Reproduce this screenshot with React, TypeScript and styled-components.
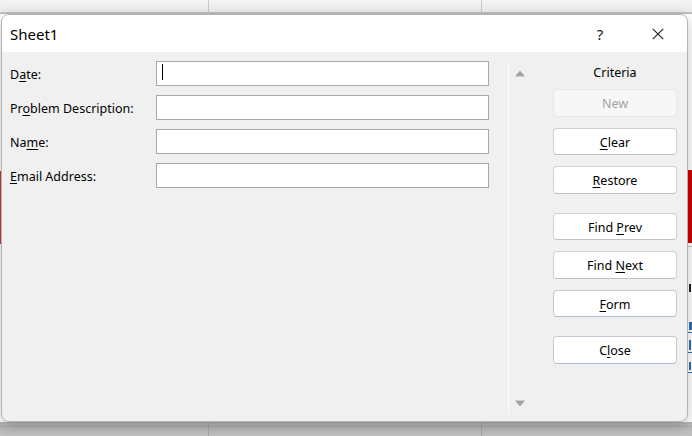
import React from "react";
import styled, { createGlobalStyle } from "styled-components";

const GlobalStyle = createGlobalStyle`
  html, body {
    margin: 0;
    padding: 0;
    background: #ececec;
  }
  * {
    box-sizing: border-box;
  }
`;

const uiFont = `"Noto Sans", "Open Sans", "Liberation Sans", sans-serif`;

// the worksheet visible behind the dialog
const Sheet = styled.div`
  position: relative;
  width: 692px;
  height: 436px;
  overflow: hidden;
  display: flex;
  flex-direction: column;
  font-family: ${uiFont};
`;

const HeaderBand = styled.div`
  height: 14px;
  background:
    linear-gradient(#c8c8c8, #c8c8c8) 208px 0 / 1px 100% no-repeat,
    linear-gradient(#c8c8c8, #c8c8c8) 481px 0 / 1px 100% no-repeat,
    linear-gradient(#c4c4c4, #c4c4c4) 0 12px / 100% 1px no-repeat,
    linear-gradient(#b8b8b8, #b8b8b8) 0 13px / 100% 1px no-repeat,
    linear-gradient(#f4f4f4, #e9e9e9);
`;

const GridBand = styled.div`
  flex: 1;
  background:
    linear-gradient(#d20000, #d20000) 688px 156px / 4px 73px no-repeat,
    linear-gradient(#c8383e, #c8383e) 0 157px / 1px 73px no-repeat,
    linear-gradient(#c6c6c6, #c6c6c6) 688px 232px / 4px 1px no-repeat,
    linear-gradient(#222, #222) 689px 270px / 2px 8px no-repeat,
    linear-gradient(#2f6fb8, #2f6fb8) 689px 308px / 3px 8px no-repeat,
    linear-gradient(#2f6fb8, #2f6fb8) 688px 318px / 4px 1px no-repeat,
    linear-gradient(#2f6fb8, #2f6fb8) 689px 326px / 2px 10px no-repeat,
    linear-gradient(#2f6fb8, #2f6fb8) 688px 338px / 4px 1px no-repeat,
    linear-gradient(#2f6fb8, #2f6fb8) 689px 348px / 2px 8px no-repeat,
    linear-gradient(#2f6fb8, #2f6fb8) 688px 358px / 4px 1px no-repeat,
    #ffffff;
`;

const FooterBand = styled.div`
  height: 14px;
  background:
    linear-gradient(#a6a6a6, #a6a6a6) 208px 0 / 1px 100% no-repeat,
    linear-gradient(#a6a6a6, #a6a6a6) 481px 0 / 1px 100% no-repeat,
    linear-gradient(#a9a9a9, #a9a9a9) 0 4px / 100% 1px no-repeat,
    linear-gradient(#b4b4b4, #c2c2c2);
`;

const Dialog = styled.div`
  position: absolute;
  left: 1px;
  top: 14px;
  width: 687px;
  height: 408px;
  display: flex;
  flex-direction: column;
  background: #f0f0f0;
  border: 1px solid #b4b4b4;
  border-radius: 8px;
  overflow: hidden;
  box-shadow: 0 4px 14px rgba(0, 0, 0, 0.22);
`;

const TitleBar = styled.div`
  height: 37px;
  flex: none;
  display: flex;
  align-items: center;
  background: #ffffff;
  padding-left: 8px;
`;

const Title = styled.div`
  flex: 1;
  font-size: 15px;
  color: #000;
  line-height: 20px;
`;

const TitleButton = styled.div`
  width: 58px;
  height: 37px;
  display: flex;
  align-items: center;
  justify-content: center;
  font-size: 15px;
  color: #111;
`;

const Body = styled.div`
  flex: 1;
  display: flex;
`;

const Fields = styled.div`
  width: 506px;
  padding: 9px 0 0 8px;
  display: flex;
  flex-direction: column;
  gap: 9px;
`;

const FieldRow = styled.div`
  display: grid;
  grid-template-columns: 146px 333px;
  align-items: center;
  height: 25px;
`;

const Label = styled.label`
  font-size: 12.5px;
  color: #000;
  padding-top: 2px;
  u {
    text-decoration: underline;
    text-underline-offset: 2px;
  }
`;

const FieldBox = styled.div<{ $focused?: boolean }>`
  position: relative;
  height: 25px;
  background: #ffffff;
  border: 1px solid #a8a8a8;
  &::after {
    content: "";
    display: ${(p) => (p.$focused ? "block" : "none")};
    position: absolute;
    left: 5px;
    top: 2px;
    width: 1px;
    height: 16px;
    background: #000;
  }
`;

const FieldInput = styled.input`
  width: 100%;
  height: 100%;
  border: none;
  outline: none;
  background: transparent;
  padding: 0 5px;
  font-family: ${uiFont};
  font-size: 12px;
  caret-color: transparent;
`;

const ScrollTrack = styled.div`
  width: 24px;
  margin: 11px 0 7px;
  border-left: 1px solid #ffffff;
  display: flex;
  flex-direction: column;
  justify-content: space-between;
  padding: 7px 0 7px 6px;
`;

const Actions = styled.div`
  width: 124px;
  margin-left: 21px;
  padding-top: 12px;
  display: flex;
  flex-direction: column;
`;

const Criteria = styled.div`
  height: 16px;
  line-height: 18px;
  text-align: center;
  font-size: 12.5px;
  color: #000;
  margin-bottom: 9px;
`;

const ButtonGroup = styled.div`
  display: flex;
  flex-direction: column;
  gap: 11px;
  & + & {
    margin-top: 19px;
  }
`;

const ActionButton = styled.button<{ $accent?: boolean }>`
  height: 27.5px;
  width: 124px;
  padding: 2px 0 0;
  font-family: ${uiFont};
  font-size: 12.5px;
  color: #000;
  background: #ffffff;
  border: 1px solid ${(p) => (p.$accent ? "#c2ccd6" : "#d0d0d0")};
  border-bottom-color: ${(p) => (p.$accent ? "#aebccb" : "#c0c0c0")};
  border-radius: 4px;
  u {
    text-decoration: underline;
    text-underline-offset: 2px;
  }
  &:disabled {
    background: #f7f7f7;
    color: #a3a3a3;
    border-color: #e6e6e6;
  }
`;

const Arrow = ({ down }: { down?: boolean }) => (
  <svg width="10" height="7" viewBox="0 0 10 7">
    <polygon
      points={down ? "0,0.5 10,0.5 5,6.5" : "5,0.5 10,6.5 0,6.5"}
      fill="#a3a3a3"
    />
  </svg>
);

const CloseIcon = () => (
  <svg width="12" height="12" viewBox="0 0 12 12">
    <path d="M0.8 0.8 L11.2 11.2 M11.2 0.8 L0.8 11.2" stroke="#1a1a1a" strokeWidth="1.1" />
  </svg>
);

const fields = [
  { pre: "D", key: "a", post: "te:" },
  { pre: "Pr", key: "o", post: "blem Description:" },
  { pre: "Na", key: "m", post: "e:" },
  { pre: "", key: "E", post: "mail Address:" },
];

interface IAction {
  pre: string;
  key: string;
  post: string;
  disabled?: boolean;
  accent?: boolean;
}

const groups: IAction[][] = [
  [
    { pre: "", key: "", post: "New", disabled: true },
    { pre: "", key: "C", post: "lear" },
    { pre: "", key: "R", post: "estore" },
  ],
  [
    { pre: "Find ", key: "P", post: "rev" },
    { pre: "Find ", key: "N", post: "ext" },
    { pre: "", key: "F", post: "orm", accent: true },
  ],
  [{ pre: "C", key: "l", post: "ose", accent: true }],
];

export default function App() {
  return (
    <>
      <GlobalStyle />
      <Sheet>
        <HeaderBand />
        <GridBand />
        <FooterBand />

        <Dialog>
          <TitleBar>
            <Title>Sheet1</Title>
            <TitleButton>?</TitleButton>
            <TitleButton>
              <CloseIcon />
            </TitleButton>
          </TitleBar>

          <Body>
            <Fields>
              {fields.map((f, i) => (
                <FieldRow key={f.post}>
                  <Label>
                    {f.pre}
                    <u>{f.key}</u>
                    {f.post}
                  </Label>
                  <FieldBox $focused={i === 0}>
                    <FieldInput type="text" />
                  </FieldBox>
                </FieldRow>
              ))}
            </Fields>

            <ScrollTrack>
              <Arrow />
              <Arrow down />
            </ScrollTrack>

            <Actions>
              <Criteria>Criteria</Criteria>
              {groups.map((g, gi) => (
                <ButtonGroup key={gi}>
                  {g.map((b) => (
                    <ActionButton
                      key={b.pre + b.key + b.post}
                      disabled={b.disabled}
                      $accent={b.accent}
                    >
                      {b.pre}
                      {b.key && <u>{b.key}</u>}
                      {b.post}
                    </ActionButton>
                  ))}
                </ButtonGroup>
              ))}
            </Actions>
          </Body>
        </Dialog>
      </Sheet>
    </>
  );
}
